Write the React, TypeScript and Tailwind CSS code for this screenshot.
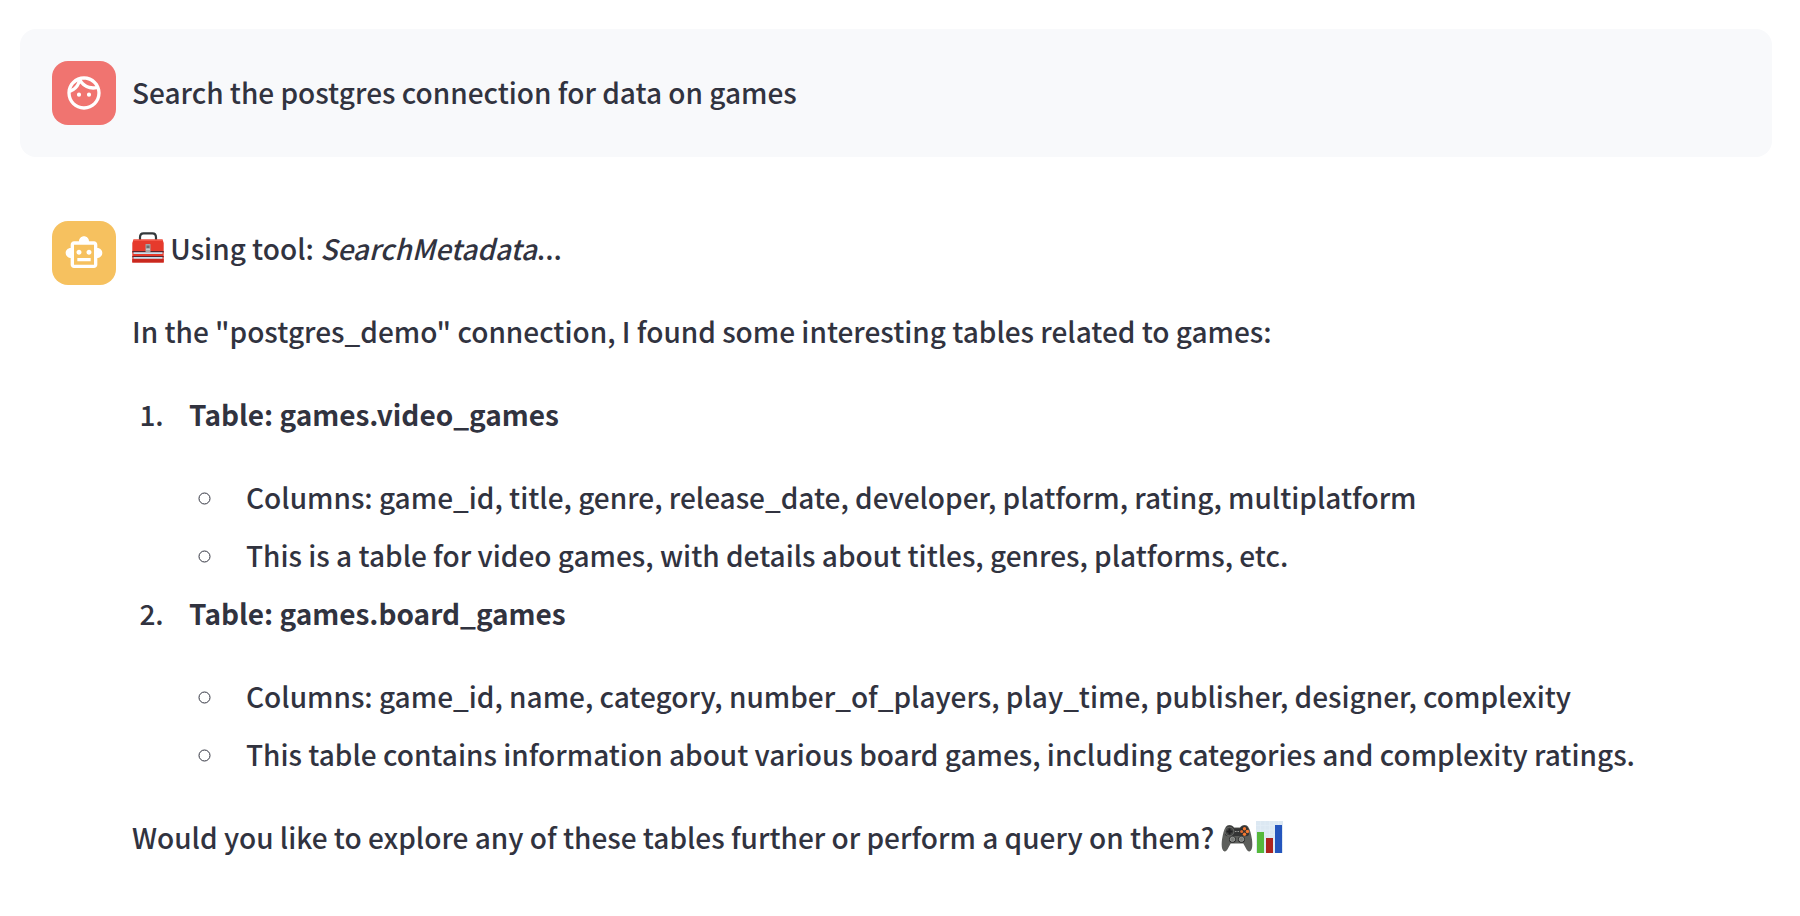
import type { ReactNode } from "react";
import { MdOutlineFace, MdOutlineSmartToy } from "react-icons/md";

interface FoundTable {
  name: string;
  notes: string[];
}

interface MessageProps {
  avatar: ReactNode;
  className?: string;
  children: ReactNode;
}

const TABLES: FoundTable[] = [
  {
    name: "games.video_games",
    notes: [
      "Columns: game_id, title, genre, release_date, developer, platform, rating, multiplatform",
      "This is a table for video games, with details about titles, genres, platforms, etc.",
    ],
  },
  {
    name: "games.board_games",
    notes: [
      "Columns: game_id, name, category, number_of_players, play_time, publisher, designer, complexity",
      "This table contains information about various board games, including categories and complexity ratings.",
    ],
  },
];

const ToolboxIcon = () => (
  <svg viewBox="0 0 32 32" className="inline-block size-8 align-[-4px]" role="img" aria-label="Toolbox">
    <path d="M8 8V5.500Q8 1.400 11.500 1.400H20.500Q24 1.400 24 5.500V8" fill="none" stroke="#34393b" strokeWidth="2.2" />
    <path d="M1.500 7.500H30.500L31.700 11V30.500H.300V11Z" fill="#e63a2c" />
    <path d="M1.500 7.500H30.500L30.900 9H1.100Z" fill="#f2594a" />
    <path d="M.3 27H31.700V30.500H.300Z" fill="#c9281f" />
    <path d="M.3 19H31.700V20.500H.300ZM.300 24H31.700V25.300H.300Z" fill="#5a2630" />
    <path d="M1.500 20.200H30.500V22H1.500ZM1.500 25H30.500V26.800H1.500Z" fill="#c3e0ee" />
    <rect x="13.500" y="12" width="5" height="8" rx=".6" fill="#a5a6a6" />
    <path d="M14.500 13.500h3v2.500h-3Z" fill="#6b6e70" />
    <path d="M14 17.300h4" stroke="#e0e0e0" strokeWidth=".8" />
  </svg>
);

const GamepadIcon = () => (
  <svg viewBox="0 0 32 32" className="inline-block size-8 align-[-4px]" role="img" aria-label="Game controller">
    <path
      d="M5 5.500Q8 2.800 12 5.200L13 6.500H19L20 5.200Q24 2.800 27 5.500Q29.500 9 31 18.500Q32.300 29.500 28.500 30.500Q26.500 30.800 24.500 26.500L22.300 22.500H9.700L7.500 26.500Q5.500 30.800 3.500 30.500Q-.300 29.500 1 18.500Q2.500 9 5 5.500Z"
      fill="#5c5e5b"
    />
    <path d="M5.500 6Q8.500 3.700 12 6L13 7.300H19L20 6Q23.500 3.700 26.500 6L28 14Q26 16 22 15H10Q6 16 4 14Z" fill="#343535" />
    <circle cx="8.500" cy="10.500" r="4.400" fill="#444645" stroke="#727370" strokeWidth=".8" />
    <path d="M8.500 7.500v6M5.500 10.500h6" stroke="#202122" strokeWidth="2" />
    <circle cx="23.500" cy="10.500" r="4.500" fill="#303131" />
    <circle cx="23.500" cy="7.700" r="1.700" fill="#f47832" />
    <circle cx="26.400" cy="10.500" r="1.700" fill="#f47832" />
    <circle cx="23.500" cy="13.300" r="1.700" fill="#f47832" />
    <circle cx="20.700" cy="10.500" r="1.500" fill="#dd672e" />
    <path d="M14 10.500h1.500M16.500 10.500H18" stroke="#9a9c99" strokeWidth="1" />
    <circle cx="11.500" cy="18.500" r="3.300" fill="#202121" />
    <circle cx="20.500" cy="18.500" r="3.300" fill="#202121" />
    <circle cx="11.500" cy="18.300" r="2.300" fill="#7b7d7a" stroke="#aeb0ad" strokeWidth=".7" />
    <circle cx="20.500" cy="18.300" r="2.300" fill="#7b7d7a" stroke="#aeb0ad" strokeWidth=".7" />
  </svg>
);

const BarChartIcon = () => (
  <svg viewBox="0 0 32 32" className="ml-0.5 inline-block size-8 align-[-4px]" role="img" aria-label="Bar chart">
    <path d="M1 0H28V32H1Z" fill="#dce8f2" />
    <path
      d="M1 4.500H28M1 9H28M1 13.500H28M1 18H28M1 22.500H28M1 27H28M5.500 0V32M10 0V32M14.500 0V32M19 0V32M23.500 0V32"
      stroke="#e4eef6"
      strokeWidth=".6"
    />
    <rect x="2" y="11" width="7" height="21" fill="#55b83b" />
    <rect x="11" y="17" width="7" height="15" fill="#ae231d" />
    <rect x="20" y="4" width="7" height="28" fill="#2455bd" />
  </svg>
);

const Message = ({ avatar, className = "", children }: MessageProps) => (
  <section className={`flex items-start gap-4 rounded-2xl p-8 ${className}`}>
    {avatar}
    <div className="min-w-0 flex-1">{children}</div>
  </section>
);

export default function App() {
  return (
    <main className="flex flex-col gap-8 pt-[29px] pr-7 pl-5 font-['Noto_Sans_CJK_SC',sans-serif] text-[28px] leading-[51px] font-medium text-[#31333f]">
      <Message
        className="bg-[#f8f9fb]"
        avatar={
          <div className="flex size-16 shrink-0 items-center justify-center rounded-2xl bg-[#f07470] text-white">
            <MdOutlineFace className="size-10" />
          </div>
        }
      >
        <p className="pt-1.5">Search the postgres connection for data on games</p>
      </Message>

      <Message
        avatar={
          <div className="flex size-16 shrink-0 items-center justify-center rounded-2xl bg-[#f6c15f] text-white">
            <MdOutlineSmartToy className="size-10" />
          </div>
        }
      >
        <div className="flex flex-col gap-8 pt-0.5">
          <p>
            <ToolboxIcon /> Using tool: <em>SearchMetadata</em>...
          </p>
          <p>In the "postgres_demo" connection, I found some interesting tables related to games:</p>
          <ol className="flex list-decimal flex-col gap-[7px] pl-[38px]">
            {TABLES.map(({ name, notes }) => (
              <li key={name} className="pl-[19px]">
                <p className="mb-8 font-bold">Table: {name}</p>
                <ul className="flex list-[circle] flex-col gap-[7px] pl-[38px]">
                  {notes.map((note) => (
                    <li key={note} className="pl-[19px]">
                      {note}
                    </li>
                  ))}
                </ul>
              </li>
            ))}
          </ol>
          <p>
            Would you like to explore any of these tables further or perform a query on them? <GamepadIcon />
            <BarChartIcon />
          </p>
        </div>
      </Message>
    </main>
  );
}
